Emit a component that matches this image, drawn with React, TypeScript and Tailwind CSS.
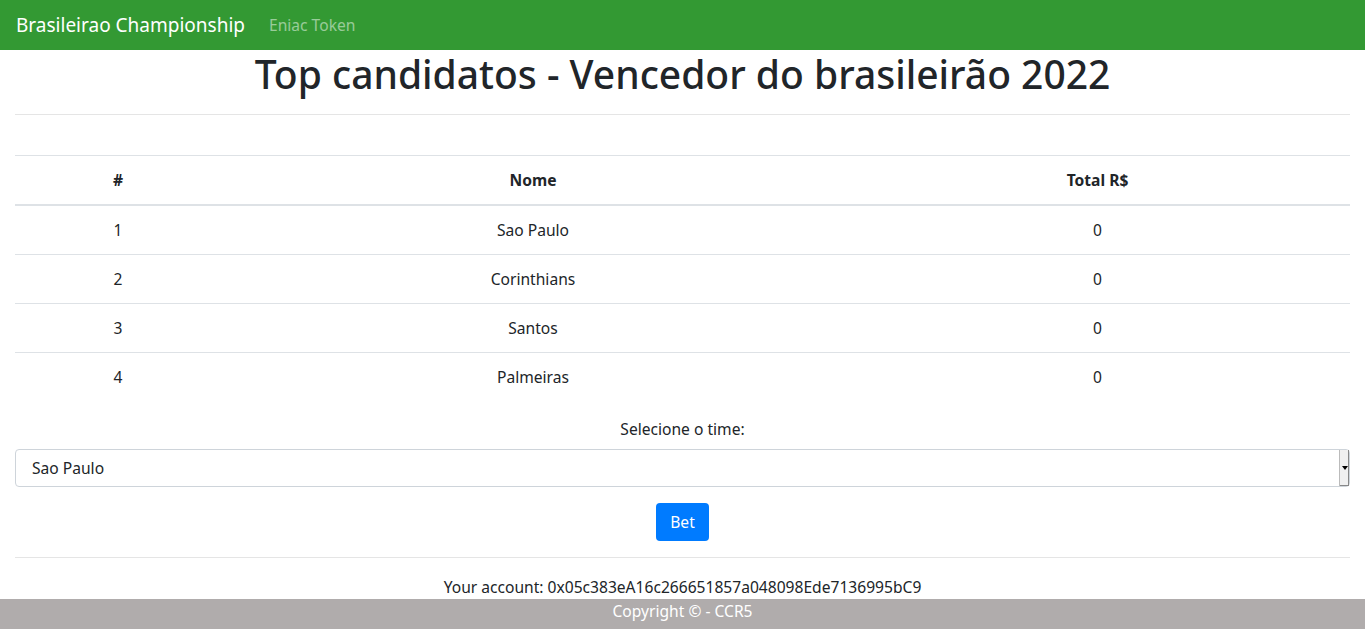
const teams = [
  { id: 1, nome: 'Sao Paulo', total: 0 },
  { id: 2, nome: 'Corinthians', total: 0 },
  { id: 3, nome: 'Santos', total: 0 },
  { id: 4, nome: 'Palmeiras', total: 0 },
];

export default function App() {
  return (
    <div className="min-h-[629px] flex flex-col bg-white text-[#212529] text-[15.6px] leading-6" style={{ fontFamily: '"Noto Sans", sans-serif' }}>
      {/* Navbar */}
      <nav className="h-[50px] bg-[#339933] flex items-center px-4">
        <span className="text-[19px] text-white mr-6">Brasileirao Championship</span>
        <span className="text-white/50">Eniac Token</span>
      </nav>

      <main className="flex-1 px-[15px]">
        <h1 className="text-[39px] leading-[48px] font-medium text-center">Top candidatos - Vencedor do brasileirão 2022</h1>
        <hr className="border-t border-black/10 mt-[16px] mb-[40px]" />

        <table className="w-full text-center border-collapse">
          <thead>
            <tr className="border-t border-[#dee2e6] border-b-2">
              <th className="w-[206px] py-3 font-bold">#</th>
              <th className="w-[624px] py-3 font-bold">Nome</th>
              <th className="py-3 font-bold">Total R$</th>
            </tr>
          </thead>
          <tbody>
            {teams.map((t, i) => (
              <tr key={t.id} className={i < teams.length - 1 ? 'border-b border-[#dee2e6]' : ''}>
                <td className="py-3">{t.id}</td>
                <td className="py-3">{t.nome}</td>
                <td className="py-3">{t.total}</td>
              </tr>
            ))}
          </tbody>
        </table>

        <div className="mt-[16px] text-center">Selecione o time:</div>
        <div className="mt-2 h-[38px] border border-[#ced4da] rounded flex items-center justify-between pl-4">
          <span>Sao Paulo</span>
          <div className="h-[36px] w-[10px] bg-[#f0f0f0] border-l border-[#bbb] shadow-[inset_-1px_-1px_0_#888] flex items-center justify-center">
            <div className="w-0 h-0 border-x-[3px] border-x-transparent border-t-[4px] border-t-black" />
          </div>
        </div>

        <div className="flex justify-center mt-4">
          <button className="h-[38px] px-[14px] bg-[#007bff] text-white rounded">Bet</button>
        </div>
        <hr className="border-t border-black/10 mt-4" />
        <div className="text-center mt-[17px]">Your account: 0x05c383eA16c266651857a048098Ede7136995bC9</div>
      </main>

      <footer className="h-[30px] bg-[#b0acac] text-white text-center">Copyright © - CCR5</footer>
    </div>
  );
}
